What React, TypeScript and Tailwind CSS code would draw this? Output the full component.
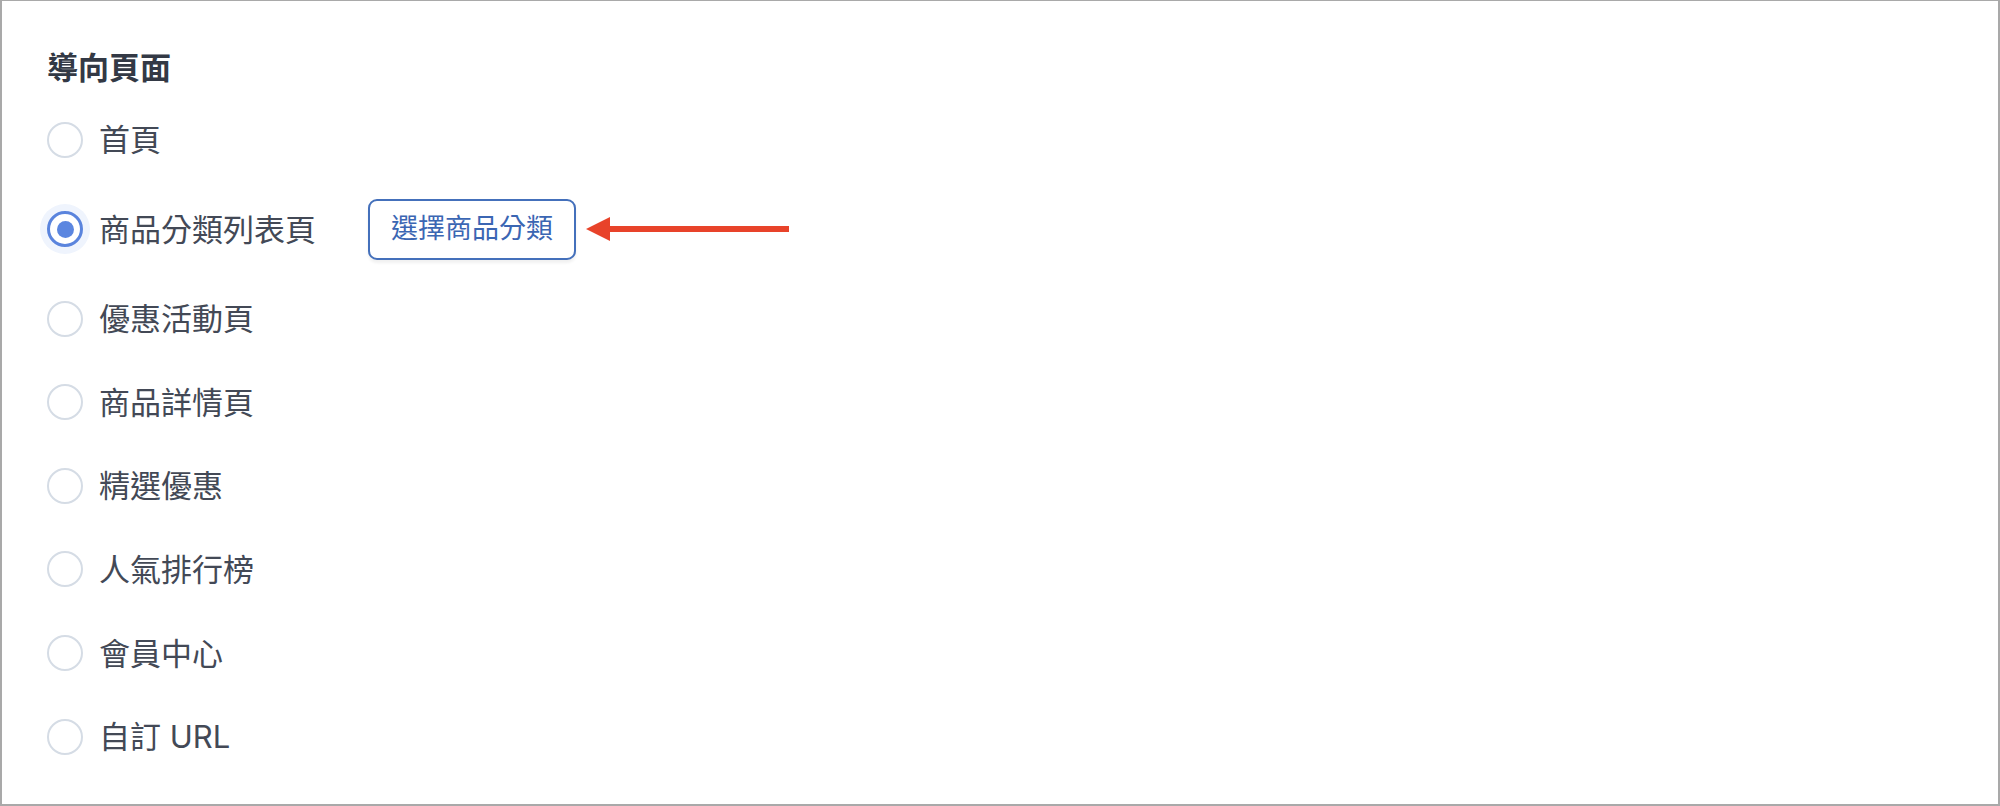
// Landing-page picker: plain radio list, the category row gets a picker button.

import { useState } from 'react';

const options = [
  { id: 'home', label: '首頁' },
  { id: 'category', label: '商品分類列表頁' },
  { id: 'promo', label: '優惠活動頁' },
  { id: 'product', label: '商品詳情頁' },
  { id: 'featured', label: '精選優惠' },
  { id: 'ranking', label: '人氣排行榜' },
  { id: 'member', label: '會員中心' },
  { id: 'custom', label: '自訂 URL' },
];

const font = { fontFamily: 'Inter, "Noto Sans CJK TC", sans-serif' };

export default function App() {
  const [selected, setSelected] = useState('category');

  return (
    <div
      className="h-[806px] w-full border-x-2 border-t border-b-2 border-[#a9a9a9] bg-white pl-[45px] pt-[47px]"
      style={font}
    >
      <h2 className="text-[31px] font-bold leading-[40px] text-[#333945]">導向頁面</h2>

      <div className="mt-[27px] flex flex-col gap-[34.6px]">
        {options.map((o) => (
          <div key={o.id} className="flex min-h-[49px] items-center">
            <label className="flex cursor-pointer items-center" onClick={() => setSelected(o.id)}>
              <Radio checked={selected === o.id} />
              <span className="ml-[16px] text-[31px] leading-[49px] text-[#434956]">{o.label}</span>
            </label>
            {o.id === 'category' && selected === 'category' && (
              <div className="ml-[52px] flex items-center">
                <button className="h-[61px] rounded-[9px] border-2 border-[#4470bb] bg-white px-[21px] text-[27px] text-[#3b66b3] shadow-[0_3px_3px_rgba(0,0,0,0.06)]">
                  選擇商品分類
                </button>
                <svg className="ml-[10px]" width="203" height="26" viewBox="0 0 203 26">
                  <polygon points="0,13 24,1 24,25" fill="#e8432a" />
                  <rect x="23" y="10" width="180" height="6" fill="#e8432a" />
                </svg>
              </div>
            )}
          </div>
        ))}
      </div>
    </div>
  );
}

function Radio({ checked }: { checked: boolean }) {
  if (checked) {
    return (
      <span className="flex h-[36px] w-[36px] items-center justify-center rounded-full border-[3px] border-[#5a84dd] bg-white shadow-[0_0_0_7px_#eff4fd]">
        <span className="h-[17px] w-[17px] rounded-full bg-[#5b86e0]" />
      </span>
    );
  }
  return <span className="h-[36px] w-[36px] rounded-full border-2 border-[#d5dce5] bg-white" />;
}
